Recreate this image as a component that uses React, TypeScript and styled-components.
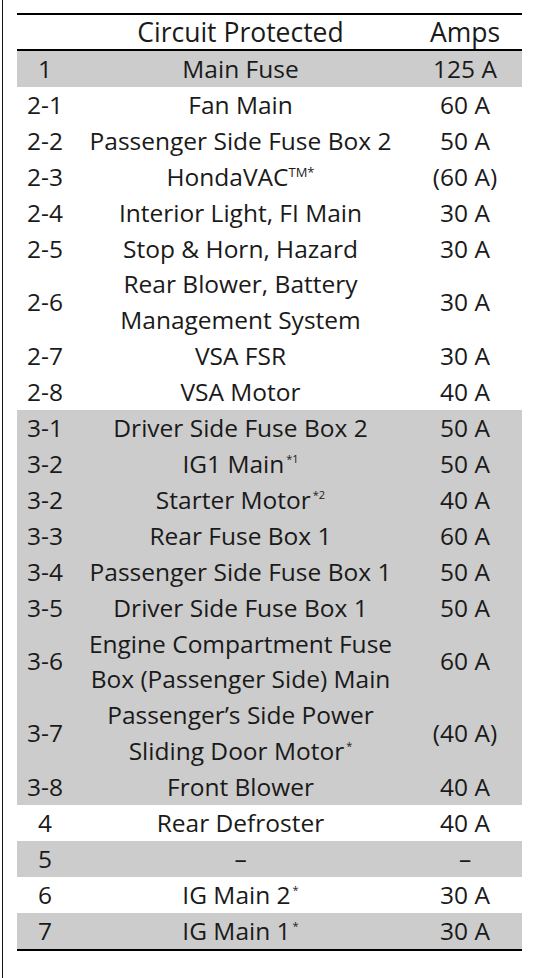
import React from "react";
import styled, { createGlobalStyle } from "styled-components";

const GlobalStyle = createGlobalStyle`
  html, body {
    margin: 0;
    padding: 0;
    background: #ffffff;
  }
  body {
    font-family: "Open Sans", "Noto Sans", "Liberation Sans", sans-serif;
    color: #1a1a1a;
  }
`;

type Fuse = {
  no: string;
  circuit: React.ReactNode;
  amps: string;
  shaded?: boolean;
};

const Frame = styled.div`
  margin-left: 2px;
  border-left: 1px solid #111;
  min-height: 978px;
  box-sizing: border-box;
  padding: 13px 0 0 14px;
`;

const Table = styled.table`
  width: 505px;
  border-collapse: collapse;
  table-layout: fixed;
  border-top: 2px solid #000;
  border-bottom: 2px solid #000;
  font-size: 24.5px;
`;

const HeadRow = styled.tr`
  border-bottom: 2px solid #000;
`;

const HeadCell = styled.th`
  font-weight: 400;
  font-size: 26.5px;
  height: 34px;
  padding: 0;
  text-align: center;
  line-height: 34px;
`;

const Row = styled.tr<{ $shaded?: boolean }>`
  background: ${(p) => (p.$shaded ? "#cccccc" : "transparent")};
`;

const Cell = styled.td`
  padding: 0;
  text-align: center;
  vertical-align: middle;
  line-height: 35.9px;
  white-space: nowrap;
`;

const Sup = styled.sup`
  font-size: 11px;
  line-height: 0;
  vertical-align: 10px;
  margin-left: 2px;
`;

const Tm = styled.sup`
  font-size: 13px;
  line-height: 0;
  vertical-align: 9px;
`;

const fuses: Fuse[] = [
  { no: "1", circuit: "Main Fuse", amps: "125 A", shaded: true },
  { no: "2-1", circuit: "Fan Main", amps: "60 A" },
  { no: "2-2", circuit: "Passenger Side Fuse Box 2", amps: "50 A" },
  {
    no: "2-3",
    circuit: (
      <>
        HondaVAC<Tm>TM*</Tm>
      </>
    ),
    amps: "(60 A)",
  },
  { no: "2-4", circuit: "Interior Light, FI Main", amps: "30 A" },
  { no: "2-5", circuit: "Stop & Horn, Hazard", amps: "30 A" },
  {
    no: "2-6",
    circuit: (
      <>
        Rear Blower, Battery
        <br />
        Management System
      </>
    ),
    amps: "30 A",
  },
  { no: "2-7", circuit: "VSA FSR", amps: "30 A" },
  { no: "2-8", circuit: "VSA Motor", amps: "40 A" },
  { no: "3-1", circuit: "Driver Side Fuse Box 2", amps: "50 A", shaded: true },
  {
    no: "3-2",
    circuit: (
      <>
        IG1 Main<Sup>*1</Sup>
      </>
    ),
    amps: "50 A",
    shaded: true,
  },
  {
    no: "3-2",
    circuit: (
      <>
        Starter Motor<Sup>*2</Sup>
      </>
    ),
    amps: "40 A",
    shaded: true,
  },
  { no: "3-3", circuit: "Rear Fuse Box 1", amps: "60 A", shaded: true },
  { no: "3-4", circuit: "Passenger Side Fuse Box 1", amps: "50 A", shaded: true },
  { no: "3-5", circuit: "Driver Side Fuse Box 1", amps: "50 A", shaded: true },
  {
    no: "3-6",
    circuit: (
      <>
        Engine Compartment Fuse
        <br />
        Box (Passenger Side) Main
      </>
    ),
    amps: "60 A",
    shaded: true,
  },
  {
    no: "3-7",
    circuit: (
      <>
        Passenger’s Side Power
        <br />
        Sliding Door Motor<Sup>*</Sup>
      </>
    ),
    amps: "(40 A)",
    shaded: true,
  },
  { no: "3-8", circuit: "Front Blower", amps: "40 A", shaded: true },
  { no: "4", circuit: "Rear Defroster", amps: "40 A" },
  { no: "5", circuit: "–", amps: "–", shaded: true },
  {
    no: "6",
    circuit: (
      <>
        IG Main 2<Sup>*</Sup>
      </>
    ),
    amps: "30 A",
  },
  {
    no: "7",
    circuit: (
      <>
        IG Main 1<Sup>*</Sup>
      </>
    ),
    amps: "30 A",
    shaded: true,
  },
];

export default function App() {
  return (
    <>
      <GlobalStyle />
      <Frame>
        <Table>
          <colgroup>
            <col style={{ width: 56 }} />
            <col style={{ width: 335 }} />
            <col style={{ width: 114 }} />
          </colgroup>
          <thead>
            <HeadRow>
              <HeadCell />
              <HeadCell>Circuit Protected</HeadCell>
              <HeadCell>Amps</HeadCell>
            </HeadRow>
          </thead>
          <tbody>
            {fuses.map((f, i) => (
              <Row key={i} $shaded={f.shaded}>
                <Cell>{f.no}</Cell>
                <Cell>{f.circuit}</Cell>
                <Cell>{f.amps}</Cell>
              </Row>
            ))}
          </tbody>
        </Table>
      </Frame>
    </>
  );
}
